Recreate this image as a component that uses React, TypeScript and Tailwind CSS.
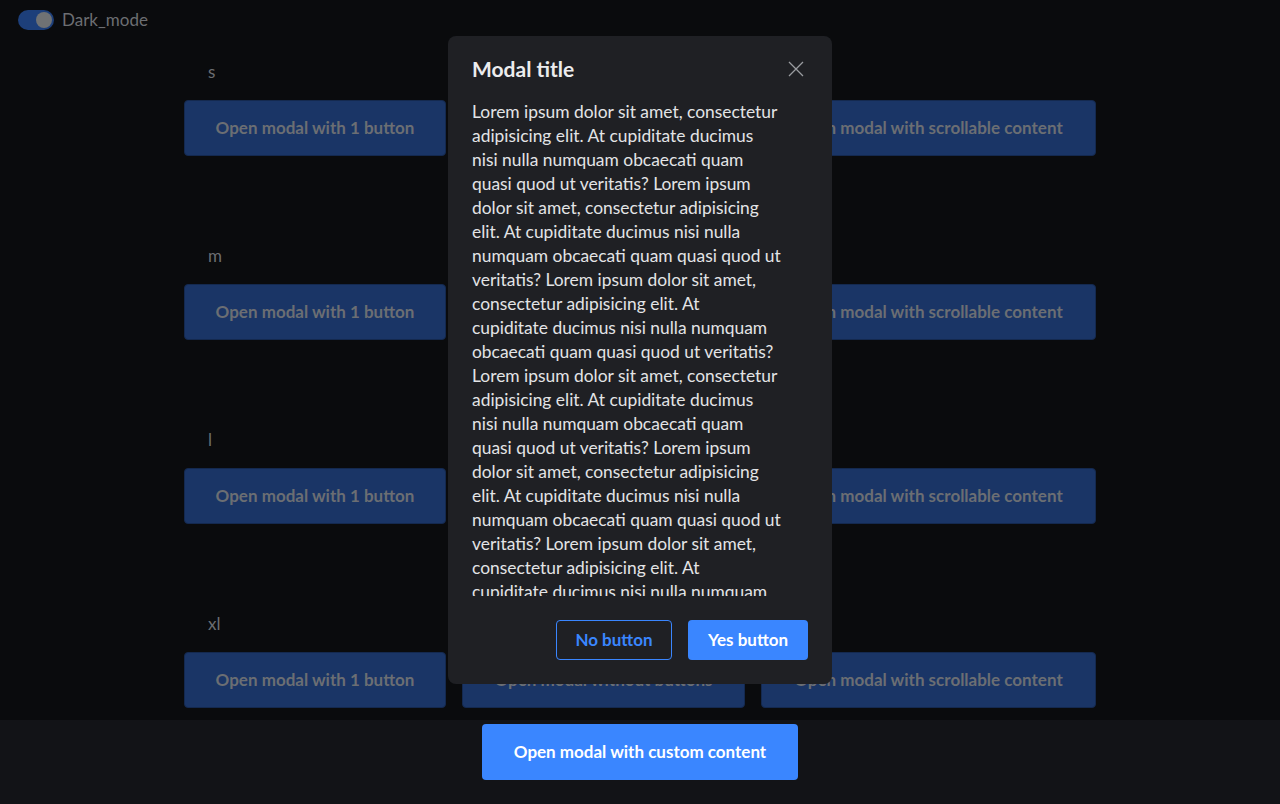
import React from "react";

const block = [
  "Lorem ipsum dolor sit amet, consectetur",
  "adipisicing elit. At cupiditate ducimus",
  "nisi nulla numquam obcaecati quam",
  "quasi quod ut veritatis? Lorem ipsum",
  "dolor sit amet, consectetur adipisicing",
  "elit. At cupiditate ducimus nisi nulla",
  "numquam obcaecati quam quasi quod ut",
  "veritatis? Lorem ipsum dolor sit amet,",
  "consectetur adipisicing elit. At",
  "cupiditate ducimus nisi nulla numquam",
  "obcaecati quam quasi quod ut veritatis?",
];
const lines = [...block, ...block].slice(0, 21);

function DimButton({ label }: { label: string }) {
  return (
    <button className="h-14 w-full rounded border border-[#14294f] bg-[#1a3566] text-[17px] font-bold text-[#6b6e73]">
      {label}
    </button>
  );
}

export default function App() {
  const sizes = ["s", "m", "l", "xl"];
  return (
    <div
      className="relative flex h-[804px] w-[1280px] flex-col overflow-hidden bg-[#0a0b0d]"
      style={{ fontFamily: "Lato, 'Noto Sans', sans-serif" }}
    >
      <div className="flex h-10 items-center gap-2 px-[18px]">
        <div className="flex h-5 w-9 items-center justify-end rounded-full bg-[#1d3f7a] px-[2px]">
          <div className="h-4 w-4 rounded-full bg-[#707274]" />
        </div>
        <span className="text-[17px] text-[#6c6e72]">Dark_mode</span>
      </div>

      <div className="mx-auto mt-5 grid w-[912px] grid-cols-[262px_283px_335px] gap-x-4">
        {sizes.map((s, i) => (
          <React.Fragment key={s}>
            <div className={`col-span-3 h-6 pl-6 text-[17px] leading-6 text-[#6c6e72] ${i > 0 ? "mt-[88px]" : ""}`}>
              {s}
            </div>
            <div className="col-span-3 mt-4 grid grid-cols-[262px_283px_335px] gap-x-4">
              <DimButton label="Open modal with 1 button" />
              <DimButton label="Open modal without buttons" />
              <DimButton label="Open modal with scrollable content" />
            </div>
          </React.Fragment>
        ))}
      </div>

      <div className="mt-3 flex flex-1 justify-center bg-[#121317] pt-1">
        <button className="h-14 w-[316px] rounded bg-[#3a86ff] text-[17px] font-bold text-white">
          Open modal with custom content
        </button>
      </div>

      <div className="absolute left-[448px] top-9 flex h-[648px] w-[384px] flex-col rounded-lg bg-[#1f2024]">
        <div className="flex items-center justify-between pl-6 pr-[22px] pt-[19px]">
          <h2 className="text-[21px] font-bold leading-7 text-[#ececee]">Modal title</h2>
          <button className="flex h-7 w-7 items-center justify-center text-[#9a9ca0]">
            <svg width="16" height="16" viewBox="0 0 16 16" fill="none" stroke="currentColor" strokeWidth="1.3">
              <path d="M1 1L15 15M15 1L1 15" />
            </svg>
          </button>
        </div>
        <div className="mt-[17px] h-[496px] overflow-hidden pl-6">
          <p className="text-[17.4px] leading-6 text-[#e3e4e6]">
            {lines.map((l, i) => (
              <span key={i} className="block whitespace-nowrap">
                {l}
              </span>
            ))}
          </p>
        </div>
        <div className="flex justify-end gap-4 px-6 pt-6">
          <button className="h-10 w-[116px] rounded border border-[#3a86ff] text-[17px] font-bold text-[#3a86ff]">
            No button
          </button>
          <button className="h-10 w-[120px] rounded bg-[#3a86ff] text-[17px] font-bold text-white">
            Yes button
          </button>
        </div>
      </div>
    </div>
  );
}
